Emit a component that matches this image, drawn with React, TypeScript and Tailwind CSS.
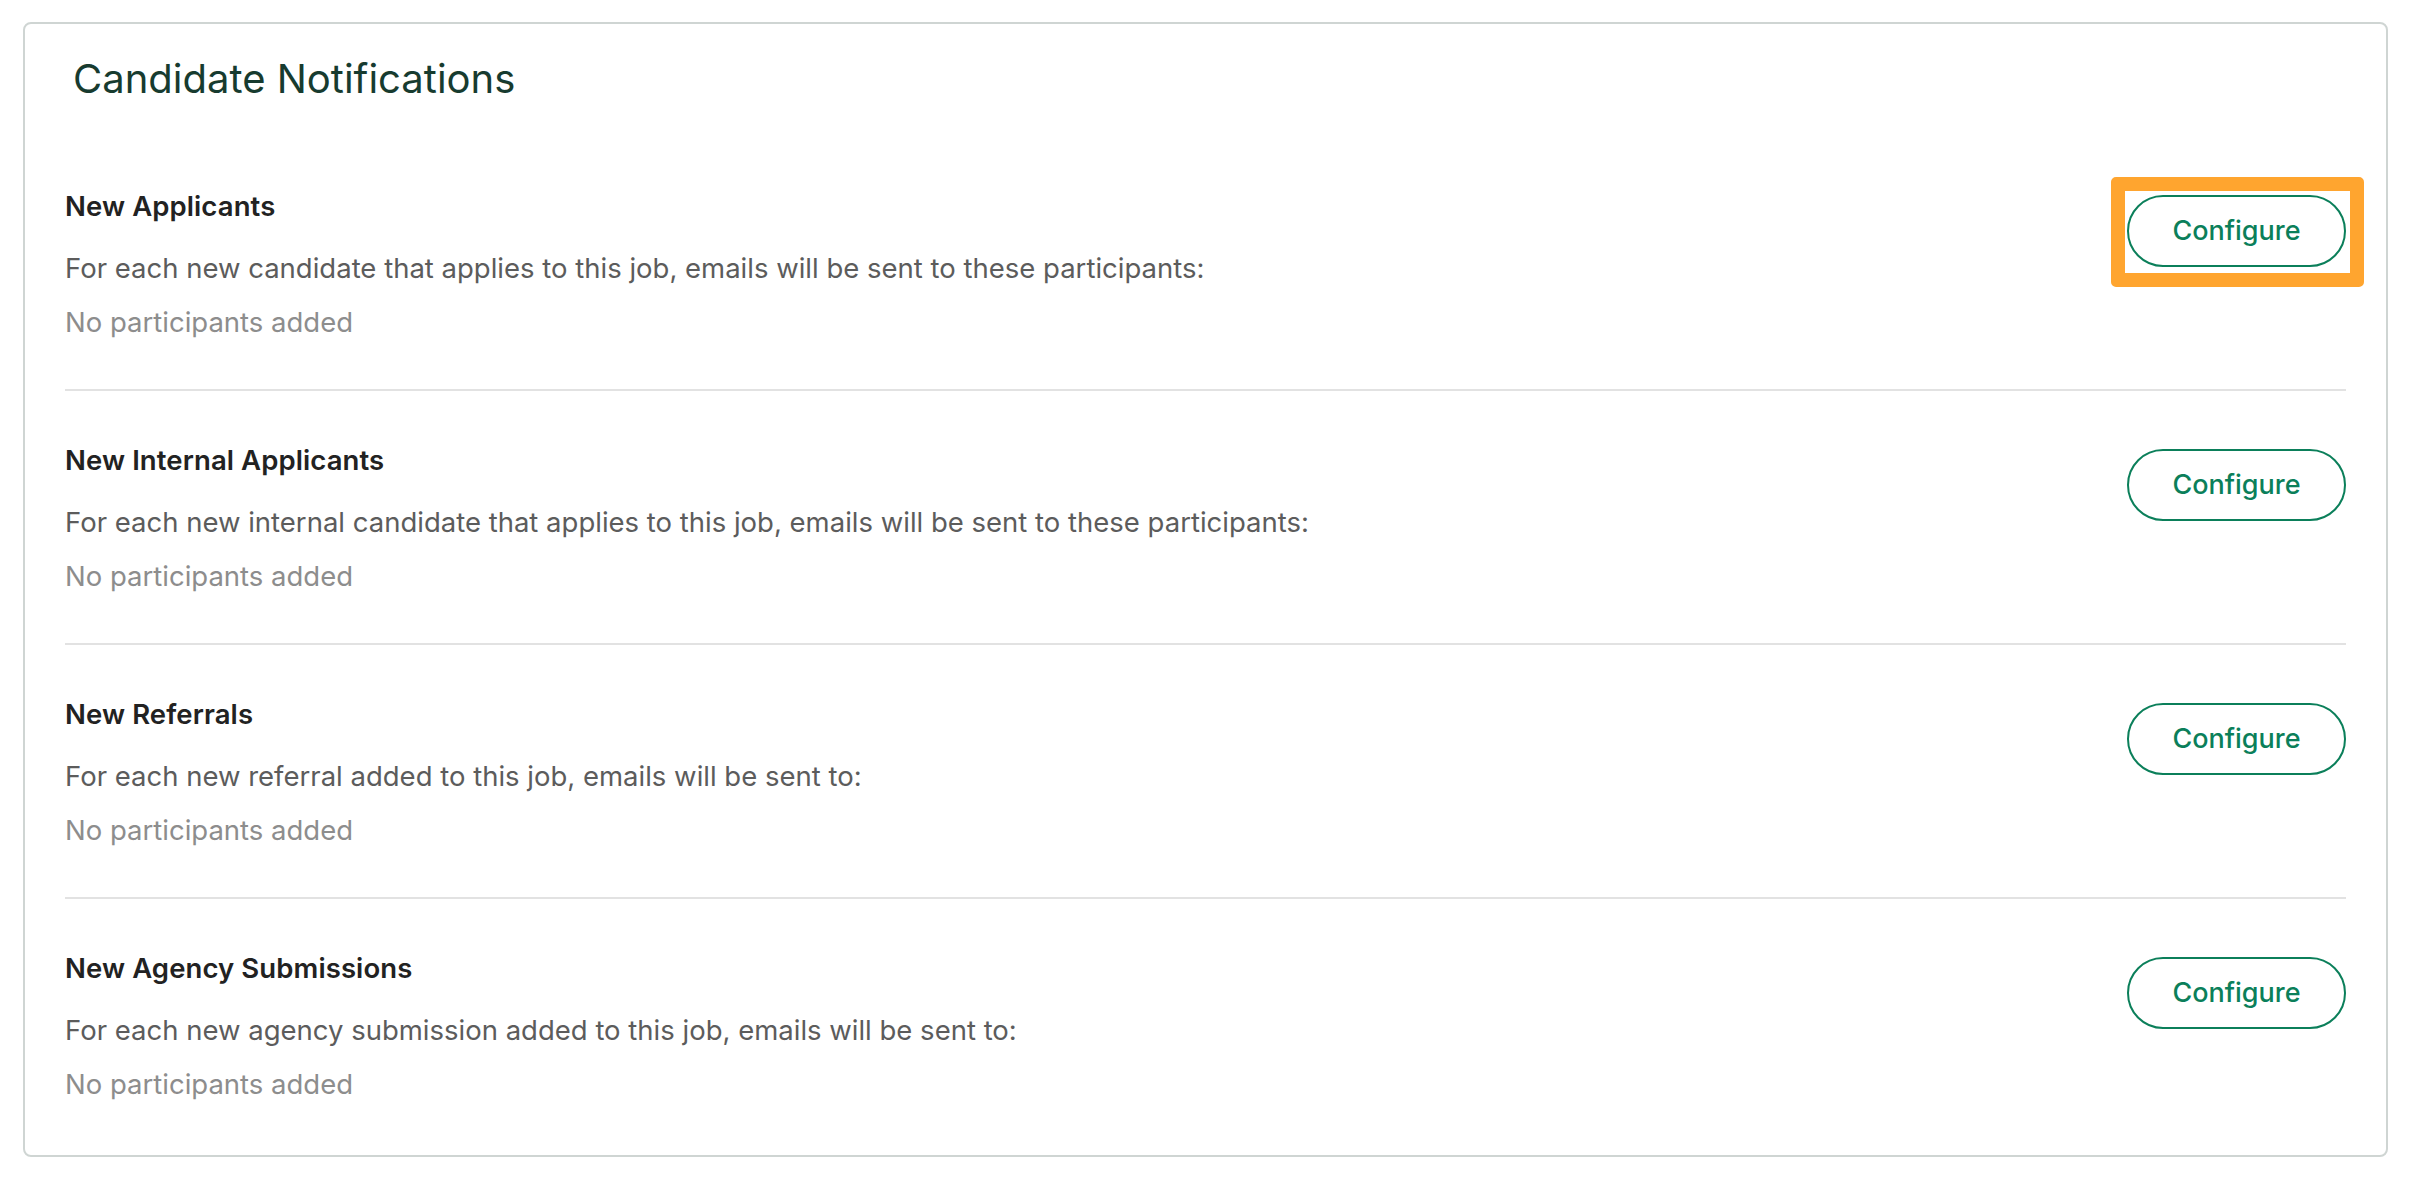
import React from "react";

const rows = [
  {
    title: "New Applicants",
    desc: "For each new candidate that applies to this job, emails will be sent to these participants:",
    highlight: true,
  },
  {
    title: "New Internal Applicants",
    desc: "For each new internal candidate that applies to this job, emails will be sent to these participants:",
    highlight: false,
  },
  {
    title: "New Referrals",
    desc: "For each new referral added to this job, emails will be sent to:",
    highlight: false,
  },
  {
    title: "New Agency Submissions",
    desc: "For each new agency submission added to this job, emails will be sent to:",
    highlight: false,
  },
];

export default function App() {
  return (
    <div
      className="min-h-[1200px] w-[2410px] bg-white pl-[23px] pt-[22px]"
      style={{ fontFamily: "Inter, 'Noto Sans', Arial, sans-serif" }}
    >
      <div className="w-[2365px] rounded-[8px] border-2 border-[#cfd5d3] bg-white px-[40px] pt-[31px] pb-[4px]">
        <h1 className="ml-[8px] text-[40px] leading-[48px] font-normal text-[#173b2f]">
          Candidate Notifications
        </h1>
        <div className="mt-[34px]">
          {rows.map((r, i) => (
            <div
              key={r.title}
              className={
                i < rows.length - 1
                  ? "flex items-start justify-between border-b-2 border-[#e2e2e2] pt-[51px] pb-[49px]"
                  : "flex items-start justify-between pt-[51px] pb-[49px]"
              }
            >
              <div className="flex flex-col">
                <div className="text-[27.5px] leading-[36px] font-semibold tracking-[0.1px] text-[#222222]">
                  {r.title}
                </div>
                <div className="mt-[26px] text-[27.5px] leading-[36px] text-[#5c5c5c]">
                  {r.desc}
                </div>
                <div className="mt-[18px] text-[27.5px] leading-[36px] text-[#8d8d8d]">
                  No participants added
                </div>
              </div>
              <div className="relative mt-[7px]">
                {r.highlight && (
                  <div className="pointer-events-none absolute left-[-16px] top-[-18px] h-[110px] w-[253px] rounded-[5px] border-[14px] border-[#ffa52f]" />
                )}
                <button className="flex h-[72px] w-[219px] items-center justify-center rounded-full border-2 border-[#0b7f5a] bg-white text-[27px] font-medium text-[#0b7f5a]">
                  Configure
                </button>
              </div>
            </div>
          ))}
        </div>
      </div>
    </div>
  );
}
